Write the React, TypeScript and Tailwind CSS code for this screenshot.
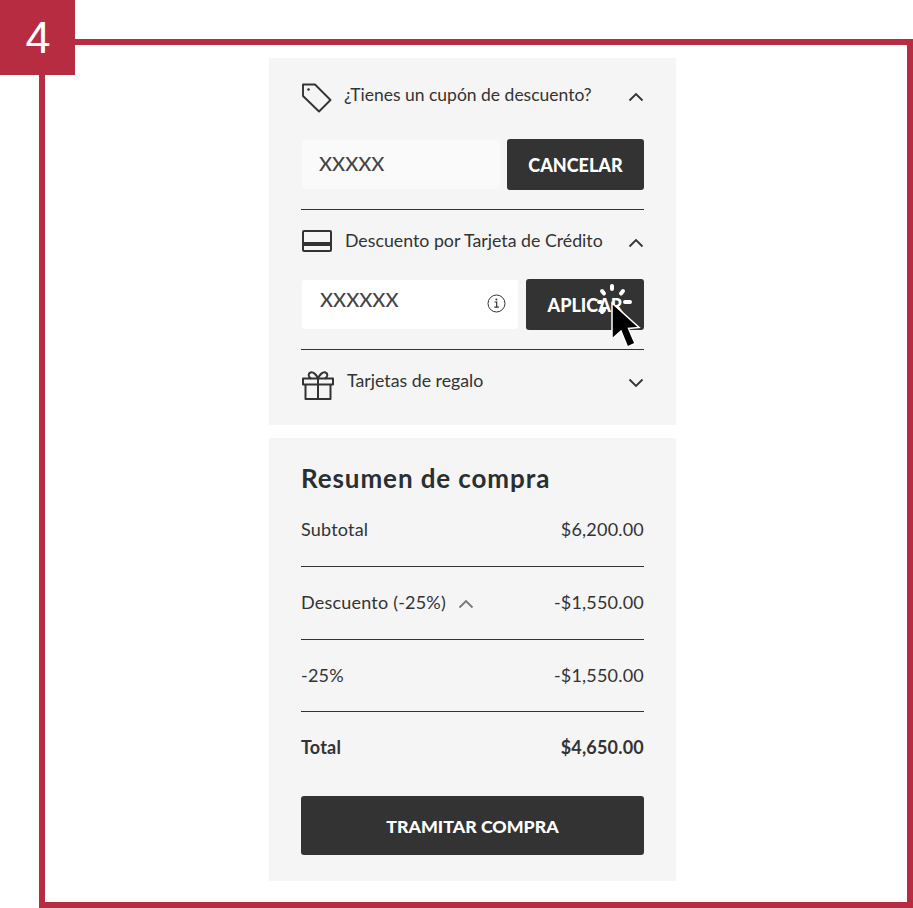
const Chevron = ({ up, className }: { up: boolean; className: string }) => (
  <svg width="16" height="10" viewBox="0 0 16 10" fill="none" stroke="currentColor" strokeWidth="1.8" className={className}>
    <path d={up ? "M1.5 8.5 8 2l6.5 6.5" : "M1.5 1.5 8 8l6.5-6.5"} />
  </svg>
);

const TagIcon = () => (
  <svg width="30" height="30" viewBox="0 0 30 30" fill="none" stroke="#333" strokeWidth="1.9" strokeLinejoin="round">
    <path d="M1 1.5H13L28.5 17 17 28.5 1 13Z" />
    <circle cx="6.5" cy="6.5" r="1.3" fill="#333" stroke="none" />
  </svg>
);

const CardIcon = () => (
  <svg width="30" height="22" viewBox="0 0 30 22" fill="none" stroke="#333" strokeWidth="2">
    <rect x="1" y="1" width="28" height="20" rx="1" />
    <path d="M1 14h28" strokeWidth="4" />
  </svg>
);

const GiftIcon = () => (
  <svg width="32" height="29" viewBox="0 0 32 29" fill="none" stroke="#333" strokeWidth="2" strokeLinejoin="round">
    <rect x="1" y="7.5" width="30" height="6" />
    <path d="M3.5 13.5v14.5h25V13.5M16 7.5V28" />
    <path d="M16 7.5c-1.5-4-5-7-7.5-6S6 6 9 7.5M16 7.5c1.5-4 5-7 7.5-6S26 6 23 7.5" />
  </svg>
);

const InfoIcon = () => (
  <svg width="19" height="19" viewBox="0 0 19 19" fill="none" stroke="#333" strokeWidth="1">
    <circle cx="9.5" cy="9.5" r="8.5" />
    <path d="M7.5 8h2.2v5M7.3 13.2h4.6" strokeWidth="1.2" />
    <circle cx="9.4" cy="5.5" r="1" fill="#333" stroke="none" />
  </svg>
);

const ClickCursor = () => (
  <svg width="54" height="72" viewBox="0 0 54 72" className="absolute left-[589px] top-[279px]">
    <g stroke="#fff" strokeWidth="4" strokeLinecap="round">
      <path d="M23 7v3M13 12l2 2.5M34 12l-2 2.5M36 23h5M13 33l2-2M10 23h2" />
    </g>
    <path d="M23 24V60L32 52 38.5 68 46 64.5 39.5 49.5 50 48.5Z" fill="#000" stroke="#fff" strokeWidth="1.5" />
  </svg>
);

const SummaryRow = ({ label, value, bold, chevron, short }: { label: string; value: string; bold?: boolean; chevron?: boolean; short?: boolean }) => (
  <div className={`flex items-center justify-between pb-[1px] text-[18px] tracking-[0.2px] text-[#333] ${short ? "h-[71px]" : "h-[72px]"} ${bold ? "font-bold" : ""}`}>
    <div className="flex items-center gap-[12px]">
      <span>{label}</span>
      {chevron && <Chevron up className="text-[#777] mt-[2px]" />}
    </div>
    <span>{value}</span>
  </div>
);

export default function App() {
  return (
    <div className="relative w-[913px] h-[908px] bg-white pl-[39px] pt-[39px] overflow-hidden font-['Lato',sans-serif]">
      {/* ----- Step badge ----- */}
      <div className="absolute left-0 top-0 w-[75px] h-[75px] bg-[#b72c40] text-white text-[45px] font-['Liberation_Sans',sans-serif] flex items-center justify-center pl-[1px] pt-[1px]">
        4
      </div>

      {/* ----- Frame ----- */}
      <div className="w-[874px] h-[869px] border-[6px] border-[#b72c40] pt-[13px] pl-[224px]">
        <div className="w-[407px] flex flex-col gap-[13px]">
          {/* ----- Discount panel ----- */}
          <section className="h-[367px] bg-[#f5f5f5] px-[32px] text-[#333]">
            <div className="h-[81px] pt-[25px] pl-[1px] flex items-start">
              <TagIcon />
              <span className="ml-[12px] text-[17.5px] leading-[24px]">¿Tienes un cupón de descuento?</span>
              <Chevron up className="ml-auto mt-[9px]" />
            </div>
            <div className="flex justify-between items-center">
              <div className="w-[198px] h-[49px] ml-[1px] rounded-[3px] bg-[#fafafa] flex items-center pl-[17px] pb-[4px] text-[20px] font-medium text-[#444]">XXXXX</div>
              <button className="w-[137px] h-[51px] rounded-[3px] bg-[#333] text-white font-black text-[18px] pt-[1px]">CANCELAR</button>
            </div>
            <div className="mt-[19px] h-px bg-[#333]" />

            <div className="h-[69px] pt-[20px] pl-[1px] flex items-start">
              <CardIcon />
              <span className="ml-[13px] -mt-[1px] text-[17.75px] leading-[22px]">Descuento por Tarjeta de Crédito</span>
              <Chevron up className="ml-auto mt-[8px]" />
            </div>
            <div className="flex justify-between items-center">
              <div className="w-[216px] h-[49px] ml-[1px] rounded-[3px] bg-white flex items-center justify-between pl-[18px] pr-[12px] text-[20px] font-medium text-[#444]">
                <span className="mb-[12px]">XXXXXX</span>
                <span className="mb-[2px]">
                  <InfoIcon />
                </span>
              </div>
              <button className="w-[118px] h-[51px] rounded-[3px] bg-[#333] text-white font-black text-[18px] pt-[2px]">APLICAR</button>
            </div>
            <div className="mt-[19px] h-px bg-[#333]" />

            <div className="pt-[21px] pl-[1px] flex items-start">
              <GiftIcon />
              <span className="ml-[13px] -mt-[2px] text-[17.75px] leading-[22px]">Tarjetas de regalo</span>
              <Chevron up={false} className="ml-auto mt-[7px]" />
            </div>
          </section>

          {/* ----- Summary panel ----- */}
          <section className="h-[443px] bg-[#f5f5f5] px-[32px] text-[#333]">
            <h2 className="h-[56px] pt-[23px] text-[26px] tracking-[0.9px] leading-[34px] font-bold text-[#2a2f32]">Resumen de compra</h2>
            <SummaryRow label="Subtotal" value="$6,200.00" />
            <div className="h-px bg-[#333]" />
            <SummaryRow label="Descuento (-25%)" value="-$1,550.00" chevron />
            <div className="h-px bg-[#333]" />
            <SummaryRow label="-25%" value="-$1,550.00" short />
            <div className="h-px bg-[#333]" />
            <SummaryRow label="Total" value="$4,650.00" bold />
            <button className="mt-[12px] w-full h-[59px] rounded-[3px] bg-[#333] text-white font-black text-[17.75px] pt-[1px]">TRAMITAR COMPRA</button>
          </section>
        </div>
      </div>

      <ClickCursor />
    </div>
  );
}
